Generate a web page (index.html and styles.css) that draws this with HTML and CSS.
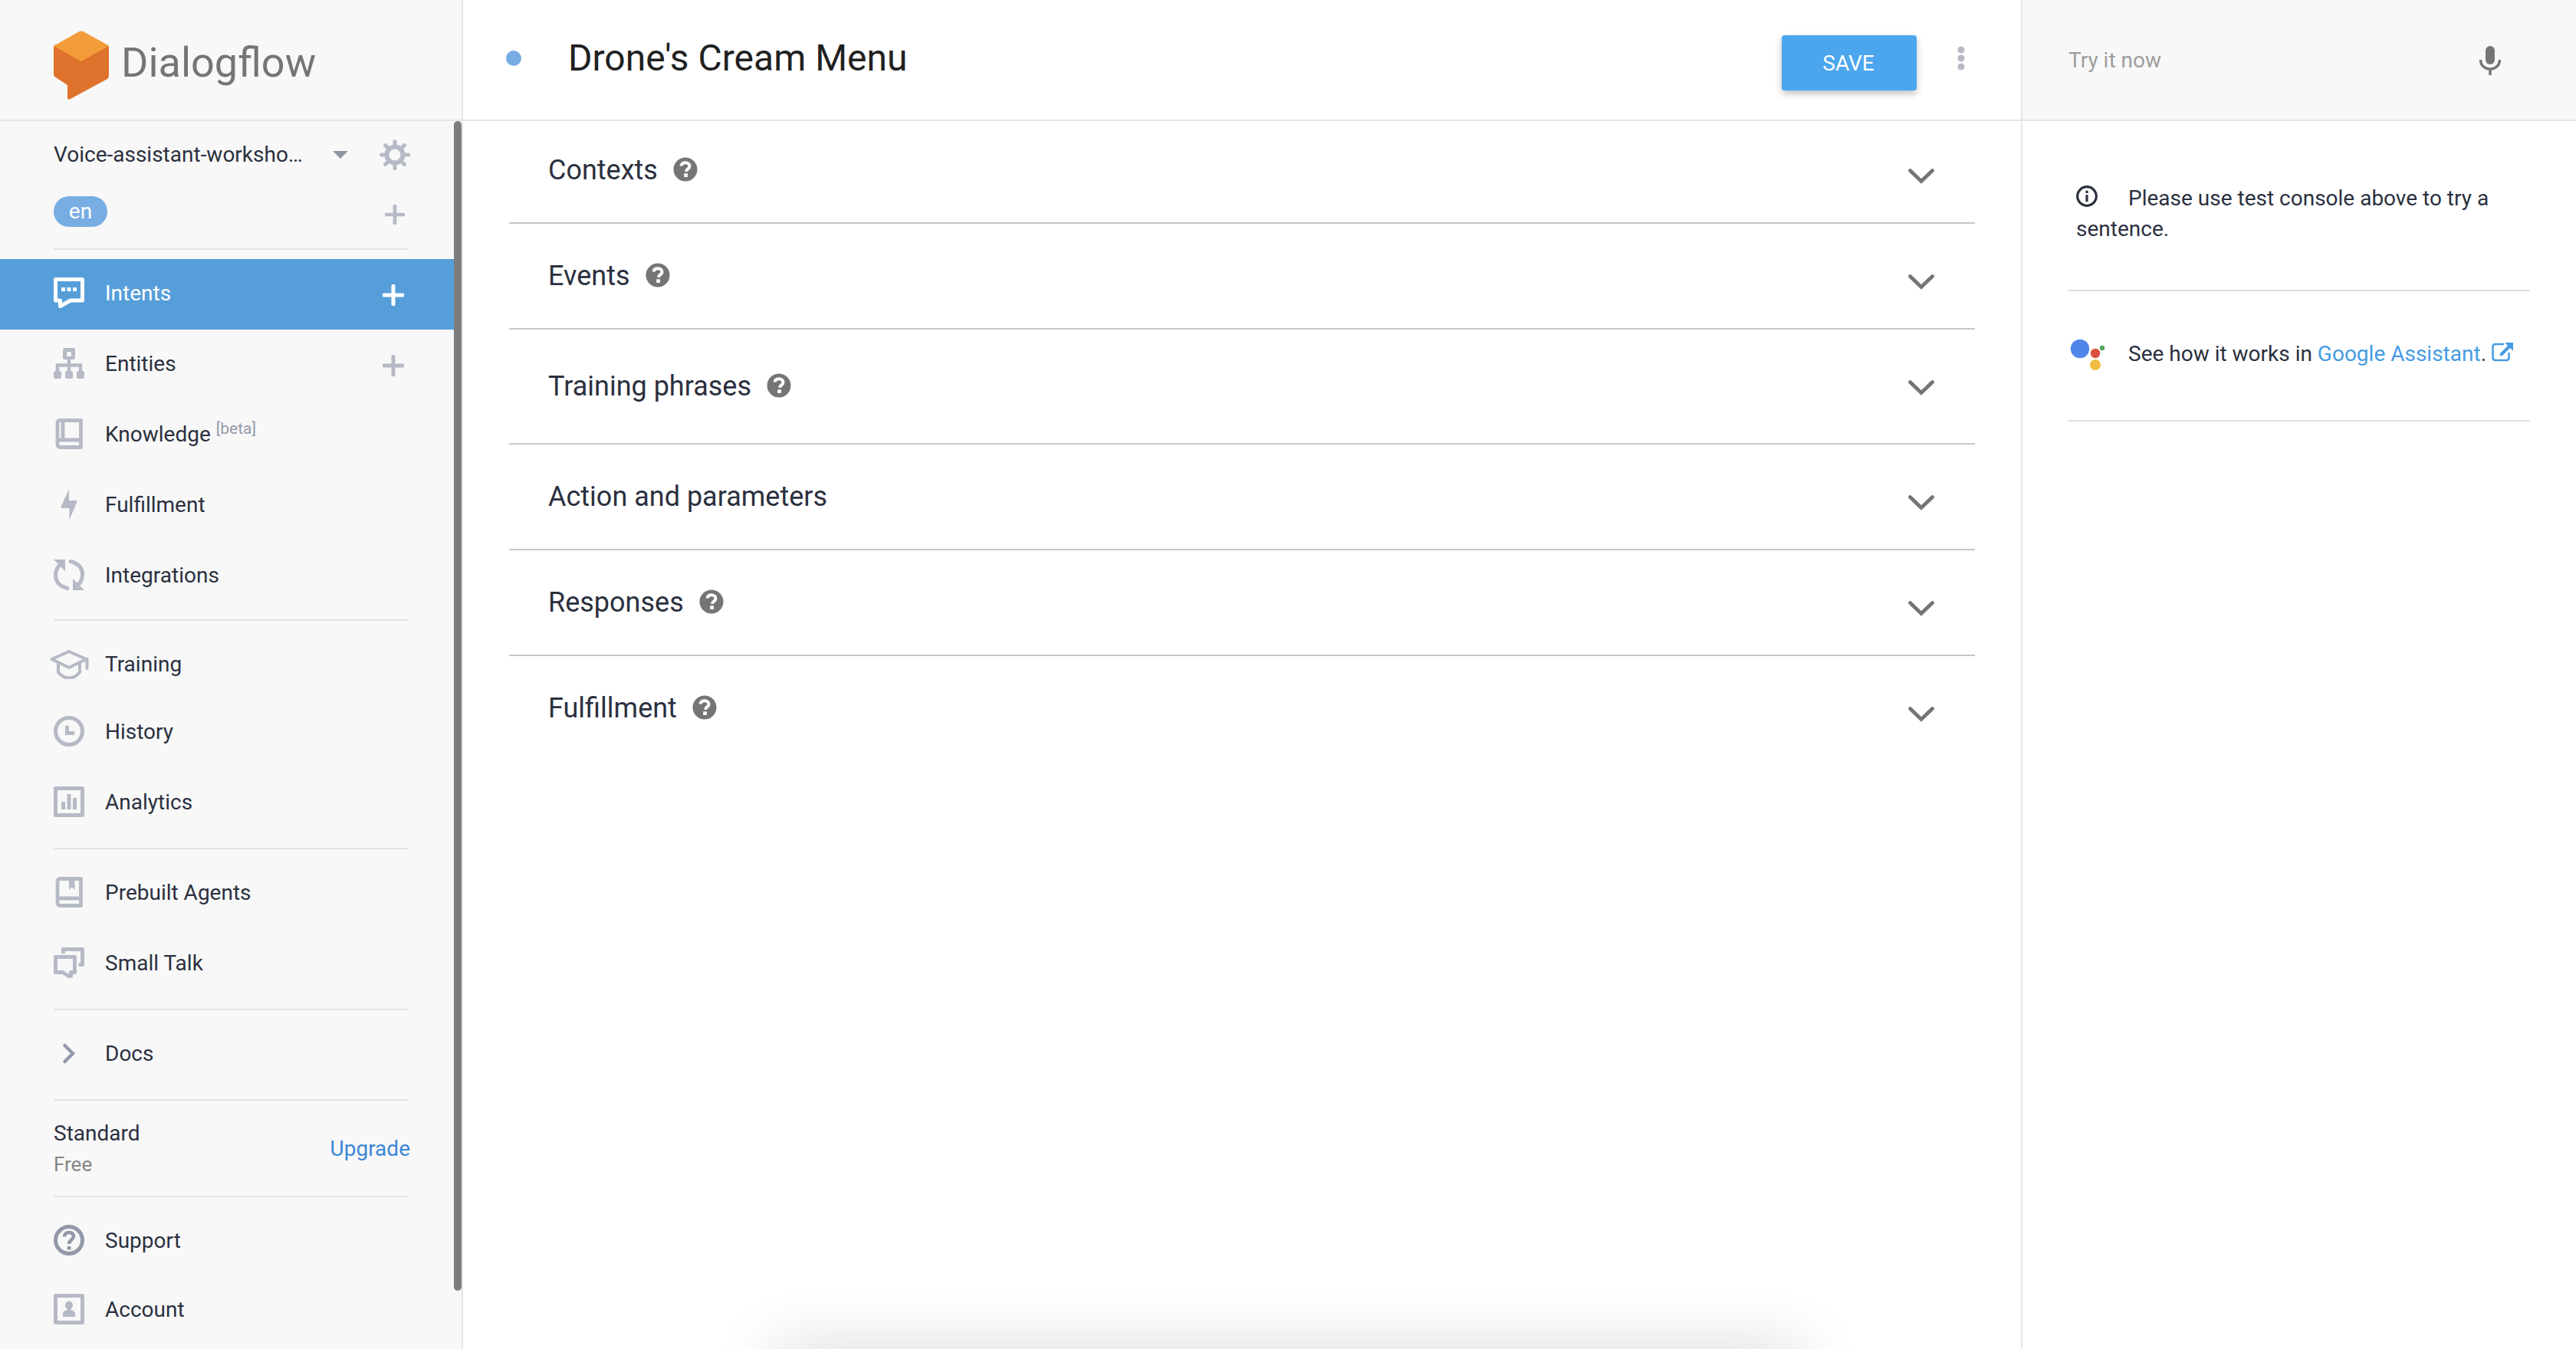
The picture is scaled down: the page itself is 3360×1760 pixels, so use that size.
FILE: index.html
```html
<!DOCTYPE html>
<html lang="en">
<head>
<meta charset="utf-8">
<title>Dialogflow</title>
<link rel="stylesheet" href="styles.css">
</head>
<body>
<svg class="sprite" aria-hidden="true">
  <symbol id="help" viewBox="0 0 32 32"><circle cx="16" cy="16" r="15.5" fill="currentColor"/><path d="M10.5 11.5C11 8.5 13 7.200 16 7.200c3.200 0 5.500 1.800 5.500 4.500 0 3.800-4.300 3.600-4.500 7.100" fill="none" stroke="#fff" stroke-width="4"/><rect x="14.200" y="21.300" width="4.800" height="4.600" fill="#fff"/></symbol>
  <symbol id="down" viewBox="0 0 36 22"><path d="M3.500 3.500L18 17.500l14.500-14" fill="none" stroke="currentColor" stroke-width="4.800" stroke-linecap="round"/></symbol>
  <symbol id="plus" viewBox="0 0 28 28"><path d="M14 2v24M2 14h24" stroke="currentColor" stroke-width="5" stroke-linecap="round"/></symbol>
</svg>
<div class="app">
  <aside class="sidebar">
    <header class="brand">
      <a class="logo" href="#">
        <svg class="logo-mark" viewBox="0 0 72 90" aria-hidden="true"><path d="M0 22Q0 19 3 18h66q3 1 3 4v36q0 3-2 5L21 89.500q-3 1-3-2V71L2 60.500Q0 59 0 57z" fill="#df722c"/><path d="M1 20.500Q1 19.500 2.500 18.500L33.500 1Q36 0 38.500 1L70 18.500Q71.500 19.500 71 20.500L36 40z" fill="#f29d3a"/></svg>
        <span>Dialogflow</span>
      </a>
    </header>
    <div class="side-scroll">
      <div class="side-content">
        <div class="agent">
          <button class="agent-name" type="button"><span>Voice-assistant-worksho…</span><svg width="20" height="10" viewBox="0 0 20 10" aria-hidden="true"><path d="M0 0h20L10 10z" fill="#9098a8"/></svg></button>
          <button class="icon-button" type="button" aria-label="Agent settings"><svg width="40" height="40" viewBox="0 0 40 40"><path d="M20 2.500v35M2.500 20h35M7.600 7.600l24.800 24.800M7.600 32.400L32.400 7.600" stroke="currentColor" stroke-width="5" stroke-linecap="round"/><circle cx="20" cy="20" r="10.500" fill="#f8f8f8" stroke="currentColor" stroke-width="6"/></svg></button>
        </div>
        <div class="langs">
          <button class="lang" type="button">en</button>
          <button class="icon-button add-lang" type="button" aria-label="Add language"><svg width="26" height="26"><use href="#plus"/></svg></button>
        </div>
        <nav>
          <ul class="nav">
            <li class="nav-item active"><a href="#"><svg class="icon" viewBox="0 0 40 40"><path d="M2.500 2.500h35v27.500H22L8.500 37.500V30h-6z" fill="none" stroke="currentColor" stroke-width="5" stroke-linejoin="round"/><path d="M10 13h5v5h-5zM17.500 13h5v5h-5zM25 13h5v5h-5z" fill="currentColor"/></svg>Intents</a><button class="icon-button" type="button" aria-label="Create intent"><svg width="28" height="28"><use href="#plus"/></svg></button></li>
            <li class="nav-item"><a href="#"><svg class="icon" viewBox="0 0 40 40"><path d="M20 12v20M5 32V22.500h30V32" fill="none" stroke="currentColor" stroke-width="4.500"/><rect x="12" y="0" width="16" height="15" rx="2.500" fill="currentColor"/><rect x="17" y="5" width="6" height="6" rx="1" fill="#f8f8f8"/><rect y="30" width="10" height="10" rx="2.500" fill="currentColor"/><rect x="15" y="30" width="10" height="10" rx="2.500" fill="currentColor"/><rect x="30" y="30" width="10" height="10" rx="2.500" fill="currentColor"/></svg>Entities</a><button class="icon-button" type="button" aria-label="Create entity"><svg width="28" height="28"><use href="#plus"/></svg></button></li>
            <li class="nav-item"><a href="#"><svg class="icon" viewBox="0 0 40 40"><path d="M8.500 2.500h27v35h-27Q5 37.500 5 34V6q0-3.500 3.500-3.500zM5 28h30M12 2.500V28" fill="none" stroke="currentColor" stroke-width="4.800" stroke-linejoin="round"/></svg><span>Knowledge <sup>[beta]</sup></span></a></li>
            <li class="nav-item"><a href="#"><svg class="icon" viewBox="0 0 40 40"><path d="M20 0v15h9q2 0 1 3L20.500 40V25H11q-2 0-1-3z" fill="currentColor"/></svg>Fulfillment</a></li>
            <li class="nav-item compact"><a href="#"><svg class="icon" viewBox="0 0 40 40"><path d="M18 37.500C8 35 2.500 29 2.500 20.500 2.500 14 5 9.500 9 6M22 2.500c10 2.500 15.500 8.500 15.500 17 0 6.500-2.500 11-6.500 14.500" fill="none" stroke="currentColor" stroke-width="5" stroke-linecap="round"/><path d="M0 0h15v15zM40 40H25V25z" fill="currentColor"/></svg>Integrations</a></li>
          </ul>
          <ul class="nav">
            <li class="nav-item tight"><a href="#"><svg class="icon wide" viewBox="0 0 52 40"><path d="M26 4L3.500 14 26 25 48.500 14zM12 19v12q6 7.500 14 7.500T40 31V19M49.500 14v12" fill="none" stroke="currentColor" stroke-width="4" stroke-linecap="round" stroke-linejoin="round"/></svg>Training</a></li>
            <li class="nav-item"><a href="#"><svg class="icon" viewBox="0 0 40 40"><circle cx="20" cy="20" r="17.500" fill="none" stroke="currentColor" stroke-width="5"/><path d="M17.500 15v7.500H25" fill="none" stroke="currentColor" stroke-width="5" stroke-linecap="round"/></svg>History</a></li>
            <li class="nav-item"><a href="#"><svg class="icon" viewBox="0 0 40 40"><path d="M2.500 2.500h35v35h-35z" fill="none" stroke="currentColor" stroke-width="5" stroke-linejoin="round"/><path d="M10 20h5v10h-5zM17.500 10h5v20h-5zM25 15h5v15h-5z" fill="currentColor"/></svg>Analytics</a></li>
          </ul>
          <ul class="nav">
            <li class="nav-item"><a href="#"><svg class="icon" viewBox="0 0 40 40"><path d="M8.500 2.500h27v35h-27Q5 37.500 5 34V6q0-3.500 3.500-3.500zM5 28h30" fill="none" stroke="currentColor" stroke-width="4.800" stroke-linejoin="round"/><path d="M20 3h7.500v14L23.750 13.500 20 17z" fill="currentColor"/></svg>Prebuilt Agents</a></li>
            <li class="nav-item"><a href="#"><svg class="icon" viewBox="0 0 40 40"><path d="M12.500 8V2.500h25v20H32.500M2.500 12.500h25v20h-5v5H19.500L12 32.500H2.500z" fill="none" stroke="currentColor" stroke-width="5" stroke-linejoin="round"/></svg>Small Talk</a></li>
          </ul>
          <ul class="nav">
            <li class="nav-item dark"><a href="#"><svg class="icon" viewBox="0 0 40 40"><path d="M14.500 10L25 20.500 14.500 31" fill="none" stroke="currentColor" stroke-width="4.500" stroke-linecap="round"/></svg>Docs</a></li>
          </ul>
        </nav>
        <div class="plan">
          <div><div>Standard</div><div class="tier">Free</div></div>
          <a href="#">Upgrade</a>
        </div>
        <ul class="nav">
          <li class="nav-item compact dark"><a href="#"><svg class="icon" viewBox="0 0 40 40"><circle cx="20" cy="20" r="17.500" fill="none" stroke="currentColor" stroke-width="5"/><path d="M14 15.500Q14.500 10 20 10t6 5c0 4.500-6 4.500-6 10" fill="none" stroke="currentColor" stroke-width="4.500"/><rect x="17.500" y="28" width="5" height="4.500" rx="1" fill="currentColor"/></svg>Support</a></li>
          <li class="nav-item"><a href="#"><svg class="icon" viewBox="0 0 40 40"><path d="M2.500 2.500h35v35h-35z" fill="none" stroke="currentColor" stroke-width="5" stroke-linejoin="round"/><ellipse cx="20" cy="15" rx="5" ry="5.500" fill="currentColor"/><path d="M18 18h4v3q6 1 6 5v4H12v-4q0-4 6-5z" fill="currentColor"/></svg>Account</a></li>
        </ul>
      </div>
      <div class="scroll-track"><div class="scroll-thumb"></div></div>
    </div>
  </aside>
  <main class="main">
    <header class="intent-bar">
      <span class="status-dot"></span>
      <input class="intent-name" type="text" aria-label="Intent name" value="Drone's Cream Menu">
      <button class="save" type="button">SAVE</button>
      <button class="icon-button more" type="button" aria-label="More options"><svg width="10" height="32" viewBox="0 0 10 32" fill="currentColor"><circle cx="5" cy="5" r="4.500"/><circle cx="5" cy="16" r="4.500"/><circle cx="5" cy="27" r="4.500"/></svg></button>
    </header>
    <div class="sections">
      <section class="section first"><h2>Contexts</h2><svg class="help"><use href="#help"/></svg><button class="icon-button toggle" type="button" aria-label="Expand contexts"><svg width="36" height="22"><use href="#down"/></svg></button></section>
      <section class="section"><h2>Events</h2><svg class="help"><use href="#help"/></svg><button class="icon-button toggle" type="button" aria-label="Expand events"><svg width="36" height="22"><use href="#down"/></svg></button></section>
      <section class="section tall"><h2>Training phrases</h2><svg class="help"><use href="#help"/></svg><button class="icon-button toggle" type="button" aria-label="Expand training phrases"><svg width="36" height="22"><use href="#down"/></svg></button></section>
      <section class="section"><h2>Action and parameters</h2><button class="icon-button toggle" type="button" aria-label="Expand action and parameters"><svg width="36" height="22"><use href="#down"/></svg></button></section>
      <section class="section"><h2>Responses</h2><svg class="help"><use href="#help"/></svg><button class="icon-button toggle" type="button" aria-label="Expand responses"><svg width="36" height="22"><use href="#down"/></svg></button></section>
      <section class="section"><h2>Fulfillment</h2><svg class="help"><use href="#help"/></svg><button class="icon-button toggle" type="button" aria-label="Expand fulfillment"><svg width="36" height="22"><use href="#down"/></svg></button></section>
    </div>
  </main>
  <aside class="console">
    <header class="console-bar">
      <input class="query" type="text" aria-label="Try it now" placeholder="Try it now">
      <button class="icon-button mic" type="button" aria-label="Speak"><svg width="28" height="38" viewBox="0 0 28 38"><rect x="8" width="12" height="24" rx="6" fill="currentColor"/><path d="M1.500 18c0 7.500 5.500 12 12.500 12s12.500-4.500 12.500-12M14 30v8" fill="none" stroke="currentColor" stroke-width="3.500"/></svg></button>
    </header>
    <div class="console-body">
      <p class="hint"><svg class="info" width="28" height="28" viewBox="0 0 28 28"><circle cx="14" cy="14" r="12.300" fill="none" stroke="currentColor" stroke-width="3.200"/><path d="M12.400 6.800h3.200v3.200h-3.200zM12.400 12.200h3.200v9h-3.200z" fill="currentColor"/></svg>Please use test console above to try a sentence.</p>
      <div class="assistant">
        <svg width="46" height="42" viewBox="0 0 46 42"><circle cx="13" cy="13" r="12.200" fill="#5086ec"/><circle cx="33" cy="19" r="6.200" fill="#d9503f"/><circle cx="42" cy="12" r="3.200" fill="#58a55c"/><circle cx="33" cy="34" r="7" fill="#f2bd42"/></svg>
        <p>See how it works in <a href="#">Google Assistant</a>. <a href="#" aria-label="Open Google Assistant"><svg width="28" height="26" viewBox="0 0 28 26"><path d="M16 3H5Q1.500 3 1.500 6.500v14Q1.500 24 5 24h14q3.500 0 3.500-3.500V14" fill="none" stroke="currentColor" stroke-width="2.500"/><path d="M11.500 17.500L23 6" stroke="currentColor" stroke-width="4"/><path d="M17 1h11v11z" fill="currentColor"/></svg></a></p>
      </div>
    </div>
  </aside>
</div>
<div class="bottom-shadow"></div>
</body>
</html>
```
FILE: styles.css
```css
* {
  box-sizing: border-box;
}

body {
  margin: 0;
  overflow: hidden;
  background: #fff;
  color: #2b303f;
  font: 28px/40px Roboto, "Liberation Sans", sans-serif;
}

h2, p, ul {
  margin: 0;
  padding: 0;
  font-weight: 400;
  list-style: none;
}

a {
  color: inherit;
  text-decoration: none;
}

svg {
  display: block;
  flex: none;
}

button, input {
  padding: 0;
  border: 0;
  background: none;
  color: inherit;
  font: inherit;
}

.sprite {
  position: absolute;
  width: 0;
  height: 0;
}

.icon-button {
  display: flex;
  align-items: center;
  justify-content: center;
  color: #b6bac6;
}

.app {
  display: grid;
  grid-template-columns: 604px minmax(0, 1fr) 724px;
  height: 100vh;
}

/* Sidebar */

.sidebar {
  display: flex;
  flex-direction: column;
  min-height: 0;
  border-right: 2px solid #e6e6e6;
  background: #f8f8f8;
}

.brand,
.intent-bar,
.console-bar {
  display: flex;
  flex: none;
  height: 158px;
  border-bottom: 2px solid #e6e6e6;
}

.brand {
  padding: 40px 70px 0;
}

.logo {
  display: flex;
  gap: 16px;
  height: 90px;
  color: #757575;
  font-size: 54px;
  line-height: 84px;
}

.logo-mark {
  width: 72px;
  height: 90px;
}

.side-scroll {
  display: flex;
  flex: 1;
  min-height: 0;
}

.side-content {
  flex: 1;
  min-width: 0;
  overflow: hidden;
}

.scroll-track {
  width: 10px;
}

.scroll-thumb {
  height: calc(100% - 76px);
  border-radius: 5px;
  background: #7d7d7d;
}

.agent {
  display: flex;
  align-items: center;
  justify-content: space-between;
  padding: 24px 57px 0 70px;
}

.agent-name {
  display: flex;
  align-items: center;
  justify-content: space-between;
  width: 384px;
}

.langs {
  display: flex;
  align-items: center;
  justify-content: space-between;
  margin: 34px 60px 12px 70px;
  padding-bottom: 28px;
  border-bottom: 2px solid #e4e4e4;
}

.lang {
  width: 70px;
  height: 40px;
  border-radius: 20px;
  background: #78ade4;
  color: #fff;
}

.add-lang {
  padding: 8px 4px 0;
}

.nav + .nav::before {
  display: block;
  height: 2px;
  margin: 12px 60px 12px 70px;
  background: #e4e4e4;
  content: "";
}

.nav-item {
  display: flex;
  align-items: flex-start;
  justify-content: space-between;
  height: 92px;
  padding: 24px 65px 0 70px;
}

.nav-item a {
  display: flex;
  align-items: flex-start;
  gap: 27px;
  line-height: 42px;
}

.nav-item .icon-button {
  margin-top: 9px;
}

.nav-item.compact {
  height: 90px;
}

.nav-item.tight {
  height: 88px;
}

.icon {
  width: 40px;
  height: 40px;
  color: #b6bac6;
}

.icon.wide {
  width: 52px;
  margin: 0 -6px;
}

.dark .icon {
  color: #9399a9;
}

.nav-item.active {
  background: #569eda;
  color: #fff;
}

.active .icon,
.active .icon-button {
  color: #fff;
}

sup {
  color: #9399a9;
  font-size: 21px;
  line-height: 1;
  vertical-align: 10px;
}

.plan {
  display: flex;
  align-items: center;
  justify-content: space-between;
  margin: 12px 60px 12px 70px;
  padding: 23px 0 21px;
  border-top: 2px solid #e4e4e4;
  border-bottom: 2px solid #e4e4e4;
}

.plan a {
  margin-right: -3px;
  color: #3b87d6;
}

.tier {
  color: #858585;
  font-size: 26px;
}

/* Intent editor */

.intent-bar {
  padding: 46px 73px 0 56px;
}

.status-dot {
  width: 20px;
  height: 20px;
  margin-top: 20px;
  border-radius: 50%;
  background: #78ade4;
}

.intent-name {
  flex: 1;
  height: 58px;
  margin-left: 61px;
  color: #212121;
  font-size: 48px;
}

.save {
  width: 176px;
  height: 72px;
  padding: 2px 2px 0 0;
  border-radius: 4px;
  background: #4ba6ee;
  box-shadow: 0 4px 10px rgba(0, 0, 0, .26);
  color: #fff;
}

.more {
  height: 60px;
  margin-left: 53px;
}

.sections {
  padding: 0 60px;
}

.section {
  display: flex;
  align-items: flex-start;
  height: 138px;
  padding: 44px 52px 0 51px;
  border-bottom: 2px solid #c9c4c7;
}

.section:last-child {
  border-bottom: 0;
}

.section.first {
  height: 134px;
  padding-top: 40px;
}

.section.tall {
  height: 150px;
  padding-top: 50px;
}

.section h2 {
  font-size: 36px;
  line-height: 48px;
}

.help {
  width: 32px;
  height: 32px;
  margin: 7px 0 0 20px;
  color: #757575;
}

.toggle {
  margin: 21px 0 0 auto;
  color: #757575;
}

.tall .toggle {
  margin-top: 15px;
}

/* Test console */

.console {
  border-left: 2px solid #e6e6e6;
}

.console-bar {
  align-items: center;
  justify-content: space-between;
  padding: 2px 98px 0 60px;
  background: #f8f8f8;
}

.query {
  flex: 1;
  height: 40px;
}

.query::placeholder {
  color: #9e9e9e;
  opacity: 1;
}

.mic {
  color: #757575;
}

.console-body {
  padding: 81px 60px;
}

.hint {
  height: 139px;
  padding: 0 10px;
}

.info {
  display: inline-block;
  margin-right: 40px;
  vertical-align: -2px;
}

.assistant {
  display: flex;
  gap: 30px;
  height: 172px;
  padding: 62px 0 0 2px;
  border: solid #dedede;
  border-width: 2px 0;
}

.assistant a {
  color: #459be3;
}

.assistant p svg {
  display: inline-block;
  vertical-align: -1px;
}

.bottom-shadow {
  position: fixed;
  bottom: -40px;
  left: 30%;
  width: 40%;
  height: 40px;
  box-shadow: 0 0 80px rgba(0, 0, 0, .2);
}
```
